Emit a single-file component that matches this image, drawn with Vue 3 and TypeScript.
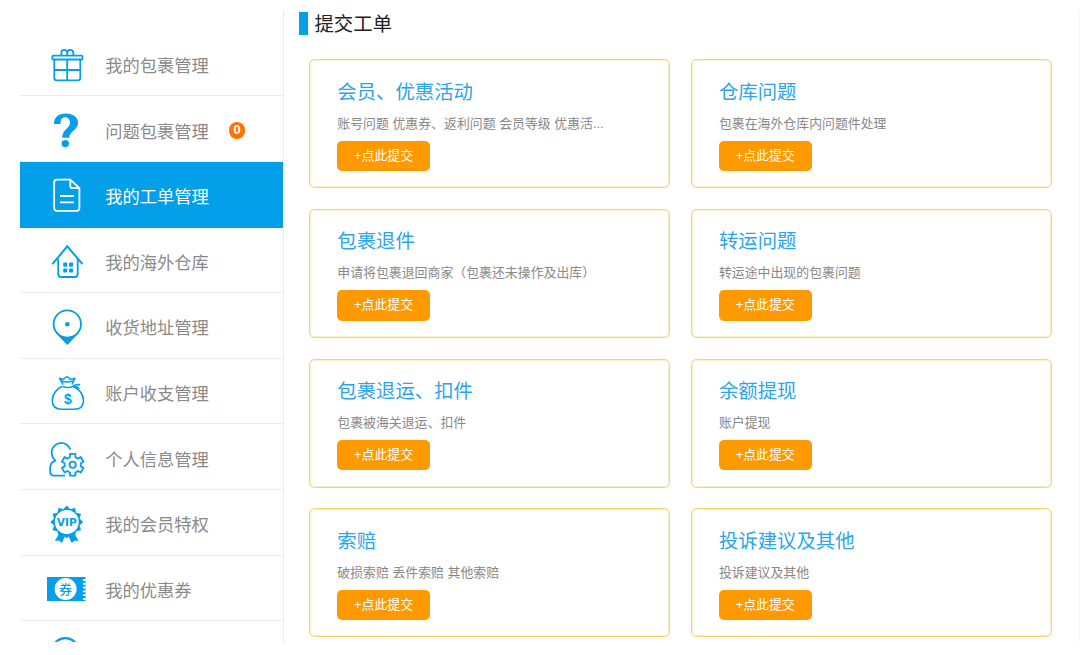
<script setup lang="ts">
interface MenuItem {
  icon: string
  label: string
  badge?: number
  active?: boolean
}

interface Ticket {
  title: string
  desc: string
}

const menu: MenuItem[] = [
  { icon: 'gift', label: '我的包裹管理' },
  { icon: 'question', label: '问题包裹管理', badge: 0 },
  { icon: 'doc', label: '我的工单管理', active: true },
  { icon: 'house', label: '我的海外仓库' },
  { icon: 'pin', label: '收货地址管理' },
  { icon: 'bag', label: '账户收支管理' },
  { icon: 'person', label: '个人信息管理' },
  { icon: 'vip', label: '我的会员特权' },
  { icon: 'coupon', label: '我的优惠券' },
  { icon: 'circle', label: '' },
]

const tickets: Ticket[] = [
  { title: '会员、优惠活动', desc: '账号问题 优惠券、返利问题 会员等级 优惠活...' },
  { title: '仓库问题', desc: '包裹在海外仓库内问题件处理' },
  { title: '包裹退件', desc: '申请将包裹退回商家（包裹还未操作及出库）' },
  { title: '转运问题', desc: '转运途中出现的包裹问题' },
  { title: '包裹退运、扣件', desc: '包裹被海关退运、扣件' },
  { title: '余额提现', desc: '账户提现' },
  { title: '索赔', desc: '破损索赔 丢件索赔 其他索赔' },
  { title: '投诉建议及其他', desc: '投诉建议及其他' },
]

function polar(cx: number, cy: number, r: number, deg: number): string {
  const a = (deg * Math.PI) / 180
  return `${(cx + r * Math.cos(a)).toFixed(2)},${(cy + r * Math.sin(a)).toFixed(2)}`
}

// Six-toothed gear outline
const gear: string = Array.from({ length: 6 }, (_, i) => {
  const d = i * 60 - 90
  return [
    polar(27.7, 27.8, 8.2, d - 19),
    polar(27.7, 27.8, 11.2, d - 14),
    polar(27.7, 27.8, 11.2, d + 14),
    polar(27.7, 27.8, 8.2, d + 19),
  ].join(' ')
}).join(' ')

// Triangular teeth round the medal
const medal: string = Array.from({ length: 12 }, (_, i) => {
  const d = i * 30 - 90
  return `${polar(21.8, 20, 16.4, d)} ${polar(21.8, 20, 13.2, d + 15)}`
}).join(' ')
</script>

<template>
  <div class="page">
    <aside class="sidebar">
      <div v-for="item in menu" :key="item.icon" class="item" :class="{ active: item.active }">
        <svg class="icon" viewBox="0 0 44 44" fill="none" stroke="currentColor" stroke-width="1.8" stroke-linejoin="round">
          <g v-if="item.icon === 'gift'">
            <rect x="7.3" y="12.6" width="30.2" height="3.9" rx="1" />
            <path d="M9.3 16.5V35q0 2.3 2.3 2.3H33q2.3 0 2.3-2.3V16.5M22.2 16.5V37M9.3 27H35.3" />
            <path d="M16.3 12.4v-2.6q0-3 3-3t3 3v2.6M22.3 12.4v-2.6q0-3 3-3t3 3v2.6" />
          </g>
          <g v-else-if="item.icon === 'question'" fill="currentColor" stroke="none">
            <path d="M9 15C9 8.6 13.5 4.6 20.8 4.6C28.2 4.6 33 8.3 33 14C33 21 24.3 22 24.3 28.8H17.2C17.2 20.6 25 19.3 25 13.6C25 10.5 23 8.2 20 8.2C16.8 8.2 15.6 10.6 15.5 15Z" />
            <circle cx="20.3" cy="34.6" r="3.7" />
          </g>
          <g v-else-if="item.icon === 'doc'">
            <path d="M25.3 5.6H12q-2.8 0-2.8 2.8v25.7q0 2.8 2.8 2.8h19.6q2.8 0 2.8-2.8V14.2ZM25.3 5.6V12q0 2.2 2.2 2.2h6.9M15 22h14M15 28.3h14" />
          </g>
          <g v-else-if="item.icon === 'house'">
            <path d="M7.3 24.2L22.3 6.4L37.5 24.2" stroke-width="2" stroke-linejoin="miter" />
            <path d="M13.2 19V34q0 3 3 3H29.7q3 0 3-3V19" />
            <g fill="currentColor" stroke="none">
              <rect x="18.2" y="22.6" width="4.1" height="4.1" rx="1" />
              <rect x="24" y="22.6" width="4.1" height="4.1" rx="1" />
              <rect x="18.2" y="28.5" width="4.1" height="4.1" rx="1" />
              <rect x="24" y="28.5" width="4.1" height="4.1" rx="1" />
            </g>
          </g>
          <g v-else-if="item.icon === 'pin'">
            <circle cx="22.3" cy="19" r="13.7" />
            <path d="M11.3 28Q22.3 37.5 33.3 28L22.3 39.6Z" fill="currentColor" stroke-width="1" />
            <circle cx="22.3" cy="19.3" r="2.3" fill="currentColor" stroke="none" />
          </g>
          <g v-else-if="item.icon === 'bag'" stroke-width="1.6">
            <path d="M17.5 15.3C12 17.5 7.3 23 7.3 29.5c0 6 4 8.7 9.5 8.7H29c6 0 9.5-2.7 9.5-8.5 0-6.7-5-12.2-10.6-14.4" />
            <path d="M18 13.5L14.6 7.3L18.4 8.4L22 5.5L25.6 8.4L29.8 7.3L27 13.5M16.5 10.2q5.7 1.6 11.5 0M17.8 15.6q5 1.8 10.2 0M27.8 15.2q3.3-2.2 7.3-1.4M28.5 15.7q4 -.6 5.6 2.5" />
            <text class="dollar" x="22.8" y="32.8" text-anchor="middle">$</text>
          </g>
          <g v-else-if="item.icon === 'person'">
            <path d="M25.3 12.6A9.6 9.6 0 0 0 6.6 14.8Q6.6 20.5 10.4 23.7Q5.2 25.3 5.2 31V34.7Q5.2 38.6 9.2 38.6H20" stroke-width="1.8" />
            <polygon :points="gear" fill="#fff" />
            <circle cx="27.7" cy="27.8" r="3.1" />
          </g>
          <g v-else-if="item.icon === 'vip'">
            <path d="M14.5 31L9.8 39l4-.6 3 2.6L20.4 33.5ZM29 31l4.7 8-4-.6-3 2.6L23.2 33.5Z" fill="currentColor" stroke="none" />
            <polygon :points="medal" fill="currentColor" stroke="none" />
            <circle cx="21.8" cy="20" r="11.9" fill="#fff" stroke="none" />
            <text class="vip" x="21.8" y="23.6" text-anchor="middle" textLength="20" lengthAdjust="spacingAndGlyphs">VIP</text>
          </g>
          <g v-else-if="item.icon === 'coupon'" stroke="none">
            <path d="M2 9H40.6V33H2Z" fill="currentColor" />
            <path d="M39.4 11V32" stroke="#fff" stroke-width="3" stroke-dasharray="1.9 1.9" />
            <circle cx="20.6" cy="21" r="11" fill="#fff" />
            <text class="quan" x="20.6" y="26" text-anchor="middle">券</text>
          </g>
          <circle v-else cx="20.3" cy="18.9" r="13.7" stroke-width="2.2" />
        </svg>
        <span class="label">{{ item.label }}</span>
        <span v-if="item.badge !== undefined" class="badge">{{ item.badge }}</span>
      </div>
    </aside>
    <main class="main">
      <h1 class="heading">提交工单</h1>
      <div class="grid">
        <section v-for="t in tickets" :key="t.title" class="card">
          <h2 class="title">{{ t.title }}</h2>
          <p class="desc">{{ t.desc }}</p>
          <button class="submit" type="button">+点此提交</button>
        </section>
      </div>
    </main>
  </div>
</template>

<style>
body {
  margin: 0;
  background: #fff;
}
</style>

<style scoped>
.page {
  box-sizing: border-box;
  display: flex;
  width: 1080px;
  height: 655px;
  padding: 10px 0 13px 20.4px;
  overflow: hidden;
  font-family: "Liberation Sans", "Noto Sans CJK SC", sans-serif;
}
.sidebar {
  box-sizing: border-box;
  flex: none;
  width: 263.6px;
  padding-top: 20.8px;
  overflow: hidden;
  border-right: 1px solid #ececec;
}
.item {
  box-sizing: border-box;
  display: flex;
  align-items: center;
  height: 65.6px;
  padding: 4px 0 0 24.6px;
  border-bottom: 1px solid #ededed;
  color: #8a8a8a;
}
.icon {
  flex: none;
  width: 44px;
  height: 44px;
  margin-right: 16.3px;
  color: #039fe9;
}
.label {
  padding-top: 2px;
  font-size: 17.25px;
  line-height: 24px;
  white-space: nowrap;
}
.active {
  background: #039fe9;
  border-color: #039fe9;
  color: #fff;
}
.active .icon {
  color: #fff;
}
.badge {
  width: 16.4px;
  height: 16.4px;
  margin-left: 20px;
  border-radius: 50%;
  background: #ff7200;
  color: #fff;
  font-size: 12.9px;
  font-weight: bold;
  line-height: 16.4px;
  text-align: center;
}
.icon text {
  fill: currentColor;
  stroke: none;
  font-weight: bold;
}
.icon .dollar {
  font-family: "Liberation Sans", sans-serif;
  font-size: 14px;
}
.icon .vip {
  font-family: "DejaVu Sans", sans-serif;
  font-size: 10.5px;
}
.icon .quan {
  font-family: "Noto Sans CJK SC", sans-serif;
  font-size: 13px;
  font-weight: 500;
}
.main {
  flex: 1;
  padding-left: 15px;
  border-right: 1px solid #f7f7f7;
}
.heading {
  height: 23px;
  margin: 2px 0 24.4px;
  padding-left: 6.5px;
  border-left: 9px solid #039fe9;
  color: #222;
  font-size: 19.4px;
  font-weight: normal;
  line-height: 24px;
}
.grid {
  display: grid;
  grid-template-columns: 361px 361px;
  grid-auto-rows: 129px;
  gap: 20.65px;
  padding-left: 10px;
}
.card {
  box-sizing: border-box;
  padding: 17.2px 27.3px 0;
  border: 1px solid #f9d366;
  border-radius: 5.5px;
  box-shadow: inset 0 0 0 1px #fdf0c8;
}
.title {
  margin: 0;
  color: #2ba5ea;
  font-size: 19.4px;
  font-weight: normal;
  line-height: 28px;
}
.desc {
  margin: 8px 0 7px;
  color: #888;
  font-size: 12.9px;
  line-height: 20px;
  white-space: nowrap;
}
.submit {
  display: block;
  width: 92.6px;
  height: 30.5px;
  padding: 0;
  border: 0;
  border-radius: 5px;
  background: #ff9900;
  color: #fff;
  font-family: inherit;
  font-size: 12.9px;
  line-height: 30.5px;
  text-align: center;
}
</style>
